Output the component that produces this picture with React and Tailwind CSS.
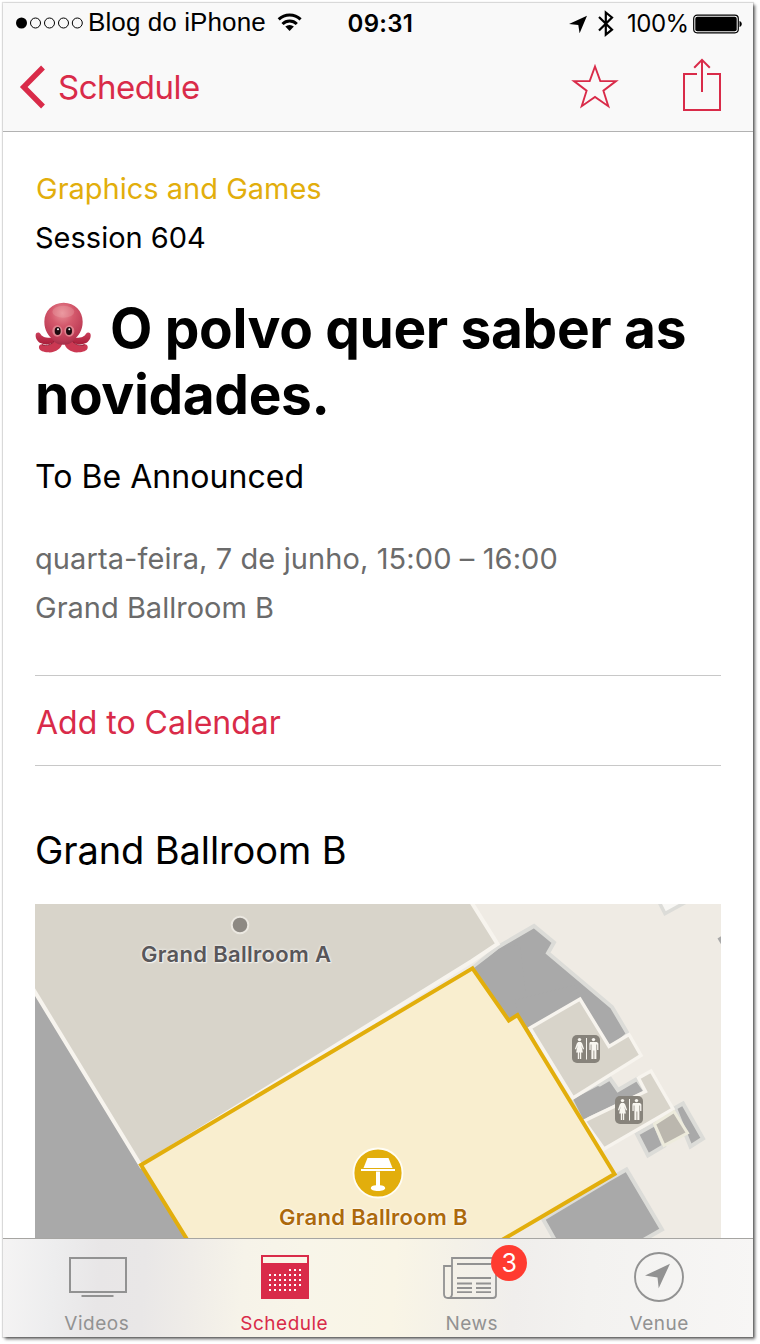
import React, { useState } from 'react';

const OctopusEmoji = () => (
  <svg viewBox="15 20 168 153" className="inline-block w-[56px] h-[51px] mr-[19px] align-[-5px]" aria-hidden="true">
    <defs>
      <radialGradient id="octoHead" cx="0.47" cy="0.25" r="0.75">
        <stop offset="0" stopColor="#e88f98" />
        <stop offset="0.4" stopColor="#d4596c" />
        <stop offset="0.85" stopColor="#bc3a54" />
        <stop offset="1" stopColor="#a42f49" />
      </radialGradient>
      <linearGradient id="octoArm" x1="0" y1="0" x2="0" y2="1">
        <stop offset="0" stopColor="#cc3f5c" />
        <stop offset="1" stopColor="#a81d38" />
      </linearGradient>
    </defs>
    <g fill="url(#octoArm)">
      <path d="M17 118c1-8 10-9 14-3 4 8 14 13 34 12l14 8c-12 14-34 15-48 8-9-5-15-15-14-25z" />
      <path d="M182 118c-1-8-10-9-14-3-4 8-14 13-34 12l-14 8c12 14 34 15 48 8 9-5 15-15 14-25z" />
    </g>
    <g fill="#cb3852">
      <path d="M27 158c-2-10 8-15 15-9 12 4 24-2 34-16l22 8c-4 20-22 32-44 30-13-1-25-4-27-13z" />
      <path d="M173 158c2-10-8-15-15-9-12 4-24-2-34-16l-22 8c4 20 22 32 44 30 13-1 25-4 27-13z" />
    </g>
    <path d="M36 148c14 5 30 0 40-14" fill="none" stroke="#8f1d35" strokeWidth="3" />
    <path d="M164 148c-14 5-30 0-40-14" fill="none" stroke="#8f1d35" strokeWidth="3" />
    <path d="M101 22c34 0 57 25 57 57 0 27-13 42-24 52-6 8-11 17-34 17s-27-9-33-17C56 121 43 106 43 79c0-32 24-57 58-57z" fill="url(#octoHead)" />
    <ellipse cx="100" cy="49" rx="33" ry="18" fill="#f5bcbc" opacity="0.25" />
    <ellipse cx="82" cy="107" rx="15" ry="17" fill="#e0808d" />
    <ellipse cx="118" cy="107" rx="15" ry="17" fill="#e0808d" />
    <ellipse cx="83" cy="107" rx="9" ry="12" fill="#1b0a0e" />
    <ellipse cx="117" cy="107" rx="9" ry="12" fill="#1b0a0e" />
    <circle cx="84" cy="102" r="3" fill="#fff" />
    <circle cx="118" cy="102" r="3" fill="#fff" />
  </svg>
);

const StatusBar = () => (
  <div className="h-[42px] flex items-center relative text-black">
    <svg className="ml-[13px] -mt-[2px]" width="68" height="12" viewBox="16 0 68 12">
      <circle cx="21.5" cy="6" r="5.5" />
      {[35.5, 49.5, 63.5, 77.3].map((cx) => (
        <circle key={cx} cx={cx} cy="6" r="5" fill="none" stroke="#000" strokeWidth="1" />
      ))}
    </svg>
    <span className="font-['Liberation_Sans',sans-serif] text-[26px] leading-[30px] tracking-[0.1px] ml-[4px] -mt-[4px] whitespace-nowrap">
      Blog do iPhone
    </span>
    <svg className="ml-[11px] -mt-[3px]" width="25" height="19" viewBox="277 13 25 19">
      <g fill="none" stroke="#000" strokeWidth="3">
        <path d="M278.7 19.3a15.8 15.8 0 0 1 21.9 0" />
        <path d="M282.5 24a10 10 0 0 1 14.3 0" />
      </g>
      <path d="M285.3 26.6a6.3 6.3 0 0 1 8.6 0L289.6 31z" />
    </svg>
    <span className="absolute left-[344.5px] top-[6px] text-[24px] leading-[30px] font-semibold tracking-[0.3px]">09:31</span>
    <div className="ml-auto mr-[10px] flex items-center">
      <svg width="18" height="18" viewBox="567 14 18 18">
        <path d="M585 14.7L577.6 32.3 576.3 23.9 567 23z" />
      </svg>
      <svg className="ml-[11px] -mt-px" width="16" height="27" viewBox="597 10 16 27">
        <path d="M598 17l13 12.6-6.2 5V12.5l6.2 5L598 30.5" fill="none" stroke="#000" strokeWidth="2.2" />
      </svg>
      <span className="ml-[13px] text-[24px] leading-[30px] tracking-[-0.5px] w-[62px] -mt-px">100%</span>
      <svg className="ml-[4px] -mt-px" width="50" height="20" viewBox="693 13.5 50 20">
        <rect x="693.7" y="14.7" width="44.6" height="17.6" rx="3.5" fill="none" stroke="#000" strokeWidth="1.2" />
        <rect x="695.3" y="16.2" width="41.4" height="14.6" rx="2" />
        <path d="M739.5 20.5c3 1 3 5 0 6z" />
      </svg>
    </div>
  </div>
);

const NavBar = () => (
  <div className="h-[84px] flex items-center text-[#d92b49]">
    <svg className="ml-[16px]" width="28" height="44" viewBox="19 65 28 44">
      <path d="M43 67.5L23.7 87 43 106.5" fill="none" stroke="currentColor" strokeWidth="5.4" />
    </svg>
    <span className="ml-[11px] text-[33px] leading-[40px] tracking-[-0.5px] -mt-px">Schedule</span>
    <svg className="ml-auto -mt-[3px]" width="50" height="50" viewBox="570 60 50 50">
      <path
        d="M595 65.5L600.3 80.1 616 80.1 603.4 89.7 608.3 105.2 595 96 581.7 105.2 586.6 89.7 574 80.1 589.7 80.1z"
        fill="none" stroke="currentColor" strokeWidth="1.9" strokeMiterlimit="10"
      />
    </svg>
    <svg className="ml-[61px] mr-[30px] -mt-[5px]" width="42" height="54" viewBox="681 58 42 54">
      <path d="M697 74H684V110H720V74H707" fill="none" stroke="currentColor" strokeWidth="2" />
      <path d="M702 92V60M694.2 67.7L702 59.9 709.8 67.7" fill="none" stroke="currentColor" strokeWidth="2" />
    </svg>
  </div>
);

const Restroom = ({ x, y }) => (
  <g transform={`translate(${x} ${y})`}>
    <rect width="28" height="28" rx="5" fill="#87837b" />
    <g fill="#f8f6f0">
      <circle cx="7.5" cy="4.6" r="1.7" />
      <path d="M6 7h3l1.2 1.4 1.9 5.6-1.2.5-1.6-4.2 1.6 7.2H9.2V24H7.9v-6.5h-.8V24H5.8v-6.5H4.1l1.6-7.2-1.6 4.2-1.2-.5 1.9-5.6z" />
      <rect x="14" y="3" width="1" height="21.5" />
      <circle cx="21.5" cy="4.6" r="1.7" />
      <path d="M18 7h7l1.4 1.4V15h-1.3V9.6h-.7V24h-2.1v-8.5h-.8V24h-2.1V9.6h-.7V15h-1.3V8.4z" />
    </g>
  </g>
);

// Floor plan, in the coordinates of the whole screen
const VenueMap = () => (
  <div className="relative mt-[30px] h-[334px] w-[686px] overflow-hidden">
    <svg className="block" width="686" height="334" viewBox="35 904 686 334">
      <rect x="35" y="904" width="686" height="334" fill="#efebe4" />
      <path d="M30 984L141 1165 190 1245H30z" fill="#a9a9a9" />
      <g fill="#a9a9a9" stroke="#dcdcd8" strokeWidth="4">
        <path d="M474 967L498 947 534 926 554 942.5 548 953 612 1007 628 1034 610 1050 580 1010 530 1040 518 1022 508 1024z" />
        <path d="M573 1100L610 1078.5 618 1090 637 1079 646 1092 584 1121z" />
        <path d="M637 1134L655 1124 664 1146 648 1155.5z" />
        <path d="M675 1108L683 1103.5 703 1138.5 690.5 1146.5z" />
        <path d="M608 1180L626.5 1169.5 662 1229.5 640 1242H556L543 1219z" />
      </g>
      {/* the upper building touches the hall without an outline */}
      <path d="M474 968L499 949 520 945 530 1030 518 1016 509 1021z" fill="#a9a9a9" />
      <path d="M530 1028L580 999 575 985 515 1000 518 1012z" fill="#a9a9a9" />
      <path d="M573 1099L598 1086 612 1092 584 1121z" fill="#a9a9a9" />
      <path d="M30 900H470L497.5 944 472 961 141 1166 30 984z" fill="#d8d4ca" stroke="#f7f4ee" strokeWidth="4" />
      <g fill="#d8d4ca" stroke="#f7f4ee" strokeWidth="3.4">
        <path d="M530 1028L580 999 609 1046.5 629 1034.5 641 1055.5 573 1098z" />
        <path d="M584 1121L645.500 1091.500 638.5 1078 651 1071 673 1109 604 1149z" />
      </g>
      <path d="M654.5 1124L674 1111.5 687.5 1133 664 1145.5z" fill="#bbb7ae" stroke="#edebdc" strokeWidth="3" />
      <path d="M658 900L665 913.5 688 901" fill="#f8f7f4" stroke="#dcdcd8" strokeWidth="3.5" />
      <path d="M717.5 938.5L722 935.5V946z" fill="#a9a9a9" />
      <path
        d="M141 1165L472.5 968.3 508.8 1020.5 517.5 1015 614.5 1174 502 1240 450 1270H206z"
        fill="#f9eecf" stroke="#e2ae0c" strokeWidth="4"
      />
      <Restroom x={572} y={1035} />
      <Restroom x={615} y={1096} />
      <circle cx="240" cy="925" r="8.3" fill="#8d8983" stroke="#ebe8e1" strokeWidth="2" />
      <circle cx="378" cy="1173" r="24.5" fill="#e2ae0c" stroke="#fffdf5" strokeWidth="1.8" />
      <g fill="#fff">
        <path d="M367.5 1158H388.5L392.500 1168H363.5z" />
        <rect x="361" y="1169" width="34" height="2" />
        <path d="M376 1171.5h4v13.8c3 .2 5.2 1.200 5.2 2.6 0 1.8-3 3.1-7.2 3.1s-7.2-1.3-7.2-3.1c0-1.4 2.2-2.4 5.2-2.6z" />
      </g>
    </svg>
    <span className="absolute left-[106px] top-[37px] text-[22px] leading-[26px] font-semibold tracking-[0.3px] whitespace-nowrap text-[#58575a] [text-shadow:0_0_3px_#f4f2ee,0_0_2px_#f4f2ee,1px_1px_1px_#f4f2ee]">
      Grand Ballroom A
    </span>
    <span className="absolute left-[244px] top-[300px] text-[22px] leading-[26px] font-semibold tracking-[0.3px] whitespace-nowrap text-[#ac690c] [text-shadow:0_0_3px_#fff,0_0_2px_#fff]">
      Grand Ballroom B
    </span>
  </div>
);

const VideosIcon = () => (
  <svg width="58" height="48" viewBox="68 1253 58 48" className="block">
    <rect x="70" y="1258" width="56" height="34" fill="none" stroke="currentColor" strokeWidth="2" className="[transform:translateX(-1px)]" />
    <rect x="80.5" y="1295" width="32" height="2" fill="currentColor" />
  </svg>
);

const dotRows = [
  { y: 1269, from: 4, to: 6 },
  { y: 1274, from: 0, to: 6 },
  { y: 1279, from: 0, to: 6 },
  { y: 1284, from: 0, to: 6 },
  { y: 1289, from: 0, to: 5 },
];

const ScheduleIcon = () => (
  <svg width="48" height="48" viewBox="261 1253 48 48" className="block">
    <rect x="261" y="1255" width="48" height="44" fill="currentColor" />
    <rect x="263" y="1257" width="44" height="6" fill="#faf6e8" />
    {dotRows.map((row) =>
      Array.from({ length: row.to - row.from + 1 }, (_, i) => (
        <rect key={`${row.y}-${i}`} x={269 + (row.from + i) * 5} y={row.y} width="2" height="2" fill="#fff" />
      ))
    )}
  </svg>
);

const NewsIcon = () => (
  <svg width="56" height="48" viewBox="442 1253 56 48" className="block">
    <g fill="none" stroke="currentColor" strokeWidth="1.8">
      <path d="M452 1294.5V1258H496V1295C496 1297 495 1298 493 1298H448" />
      <path d="M452 1266H444V1294C444 1299.3 452 1299.3 452 1294" />
      <path d="M457 1264H491M457 1278H491M457 1283.5H472M476 1283.5H491M457 1288H472M476 1288H491M457 1292.2H472M476 1292.2H491" />
    </g>
  </svg>
);

const VenueIcon = () => (
  <svg width="52" height="52" viewBox="633 1251 52 52" className="block">
    <circle cx="659" cy="1277" r="24" fill="none" stroke="currentColor" strokeWidth="1.9" />
    <path d="M670 1263.7L658.7 1288.3 657.5 1277.5 645 1275.6z" fill="currentColor" />
  </svg>
);

const tabs = [
  { id: 'videos', label: 'Videos', icon: VideosIcon, offset: 'ml-[3px]' },
  { id: 'schedule', label: 'Schedule', icon: ScheduleIcon, offset: 'ml-[1px]' },
  { id: 'news', label: 'News', icon: NewsIcon, offset: '-ml-[3px]', badge: 3 },
  { id: 'venue', label: 'Venue', icon: VenueIcon, offset: '' },
];

const TabBar = () => {
  const [active, setActive] = useState('schedule');

  return (
    <nav className="h-[99px] border-t border-[#a6a5a2] grid grid-cols-4 bg-[linear-gradient(94deg,#f5f4f4_0%,#ededee_7%,#e8e6e7_13%,#e9e7e7_19%,#efece8_25%,#f6f3e9_32%,#f8f5e9_40%,#f9f5e6_52%,#f4f1e8_60%,#f0eeec_68%,#f3f2f0_78%,#f7f6f5_100%)]">
      {tabs.map(({ id, label, icon: Icon, offset, badge }) => (
        <button
          key={id}
          onClick={() => setActive(id)}
          className={`flex flex-col items-center ${active === id ? 'text-[#d92b49]' : 'text-[#929292]'}`}
        >
          <div className={`relative h-[52px] mt-[12px] flex items-center ${offset}`}>
            <Icon />
            {badge && (
              <span className="absolute left-[49px] -top-[6px] size-[36px] rounded-full bg-[#ff3b30] text-white text-[25px] leading-[36px] text-center">
                {badge}
              </span>
            )}
          </div>
          <span className="text-[19px] leading-[24px] mt-[9px] tracking-[0.5px]">{label}</span>
        </button>
      ))}
    </nav>
  );
};

export default function App() {
  return (
    <div className="h-[1344px] w-[760px] bg-white pl-[3px] pt-[3px] overflow-hidden font-['Inter',sans-serif]">
      <div className="w-[750px] h-[1334px] bg-white flex flex-col shadow-[2px_2px_3px_rgba(0,0,0,0.6),0_0_1px_1px_rgba(0,0,0,0.12)]">
        <header className="h-[129px] bg-[#f9f9f9] border-b border-[#b2b2b2]">
          <StatusBar />
          <NavBar />
        </header>

        <main className="h-[1106px] pl-[32px] pr-[32px] pt-[32px] text-black">
          <p className="pl-px text-[29px] leading-[49px] text-[#e2ae0c]">Graphics and Games</p>
          <p className="text-[29px] leading-[49px]">Session 604</p>

          <h1 className="mt-[33px] h-[132px] text-[55px] leading-[66px] font-bold tracking-[-0.35px] whitespace-nowrap">
            <OctopusEmoji />O polvo quer saber as
            <br />
            novidades.
          </h1>

          <p className="mt-[30px] text-[32px] leading-[40px] tracking-[0.05px]">To Be Announced</p>

          <div className="mt-[37px] text-[29px] leading-[49px] tracking-[0.1px] text-[#6b6b6b]">
            <p>quarta-feira, 7 de junho, 15:00 – 16:00</p>
            <p className="tracking-normal">Grand Ballroom B</p>
          </div>

          <div className="mt-[43px] h-[91px] border-y border-[#c8c8c8] flex items-center">
            <button className="pl-px pt-[5px] text-[32px] leading-[40px] text-[#d92b49]">Add to Calendar</button>
          </div>

          <h2 className="mt-[60px] text-[38px] leading-[48px] tracking-[-0.1px]">Grand Ballroom B</h2>
          <VenueMap />
        </main>

        <TabBar />
      </div>
    </div>
  );
}
